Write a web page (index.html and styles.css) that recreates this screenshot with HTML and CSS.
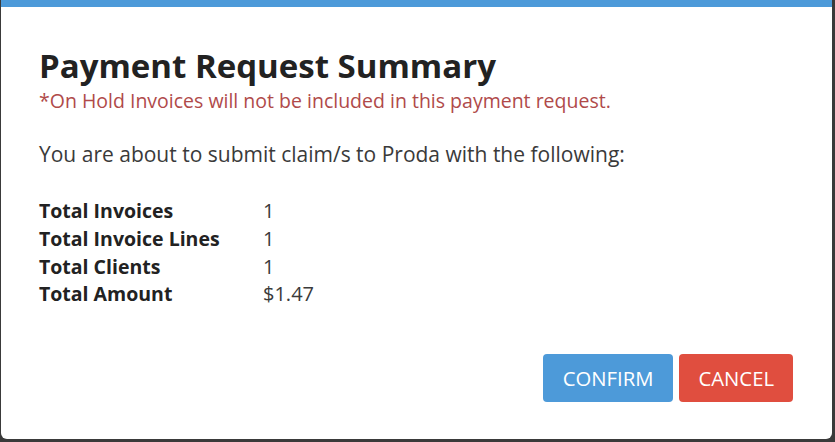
FILE: index.html
```html
<!DOCTYPE html>
<html lang="en">
<head>
  <meta charset="UTF-8">
  <meta name="viewport" content="width=device-width, initial-scale=1.0">
  <title>Payment Request Summary</title>
  <link rel="stylesheet" href="styles.css">
</head>
<body>
  <div class="modal">
    <div class="modal-body">
      <h1>Payment Request Summary</h1>
      <p class="warning">*On Hold Invoices will not be included in this payment request.</p>
      <p class="intro">You are about to submit claim/s to Proda with the following:</p>
      <div class="summary">
        <div class="label">Total Invoices</div><div class="value">1</div>
        <div class="label">Total Invoice Lines</div><div class="value">1</div>
        <div class="label">Total Clients</div><div class="value">1</div>
        <div class="label">Total Amount</div><div class="value">$1.47</div>
      </div>
    </div>
    <div class="modal-footer">
      <button class="btn btn-confirm">CONFIRM</button>
      <button class="btn btn-cancel">CANCEL</button>
    </div>
  </div>
</body>
</html>
```

FILE: styles.css
```css
body {
  margin: 0;
  padding: 0;
  background: #3a3a3a;
  font-family: "Open Sans", "Noto Sans", sans-serif;
  color: #333;
}

.modal {
  box-sizing: border-box;
  width: 831px;
  height: 439px;
  margin-left: 1px;
  background: #fff;
  border-top: 7px solid #4d9ad9;
  border-radius: 0 0 6px 6px;
  display: flex;
  flex-direction: column;
}

.modal-body {
  padding: 39px 38px 0 38px;
  flex: 1;
}

.modal-body h1 {
  margin: 0;
  font-size: 33px;
  font-weight: 700;
  line-height: 40px;
  color: #222;
}

.warning {
  margin: 2px 0 0 0;
  font-size: 19.5px;
  line-height: 26px;
  color: #b04a4a;
}

.intro {
  margin: 26px 0 0 0;
  font-size: 21px;
  line-height: 28px;
  color: #3a3a3a;
}

.summary {
  margin-top: 29px;
  display: grid;
  grid-template-columns: 224px auto;
  grid-auto-rows: 27.7px;
  font-size: 19.5px;
  align-items: center;
}

.summary .label {
  font-weight: 700;
  color: #222;
}

.summary .value {
  font-size: 20px;
  color: #3a3a3a;
}

.modal-footer {
  display: flex;
  justify-content: flex-end;
  gap: 6px;
  padding: 0 39px 37px 0;
}

.btn {
  height: 48px;
  border: none;
  border-radius: 4px;
  color: #fff;
  font-family: "Open Sans", "Noto Sans", sans-serif;
  font-size: 20.3px;
  padding: 0 19px;
  cursor: pointer;
}

.btn-confirm {
  background: #4d9ad9;
  padding: 0 20px;
}

.btn-cancel {
  background: #e04e3f;
}
```
